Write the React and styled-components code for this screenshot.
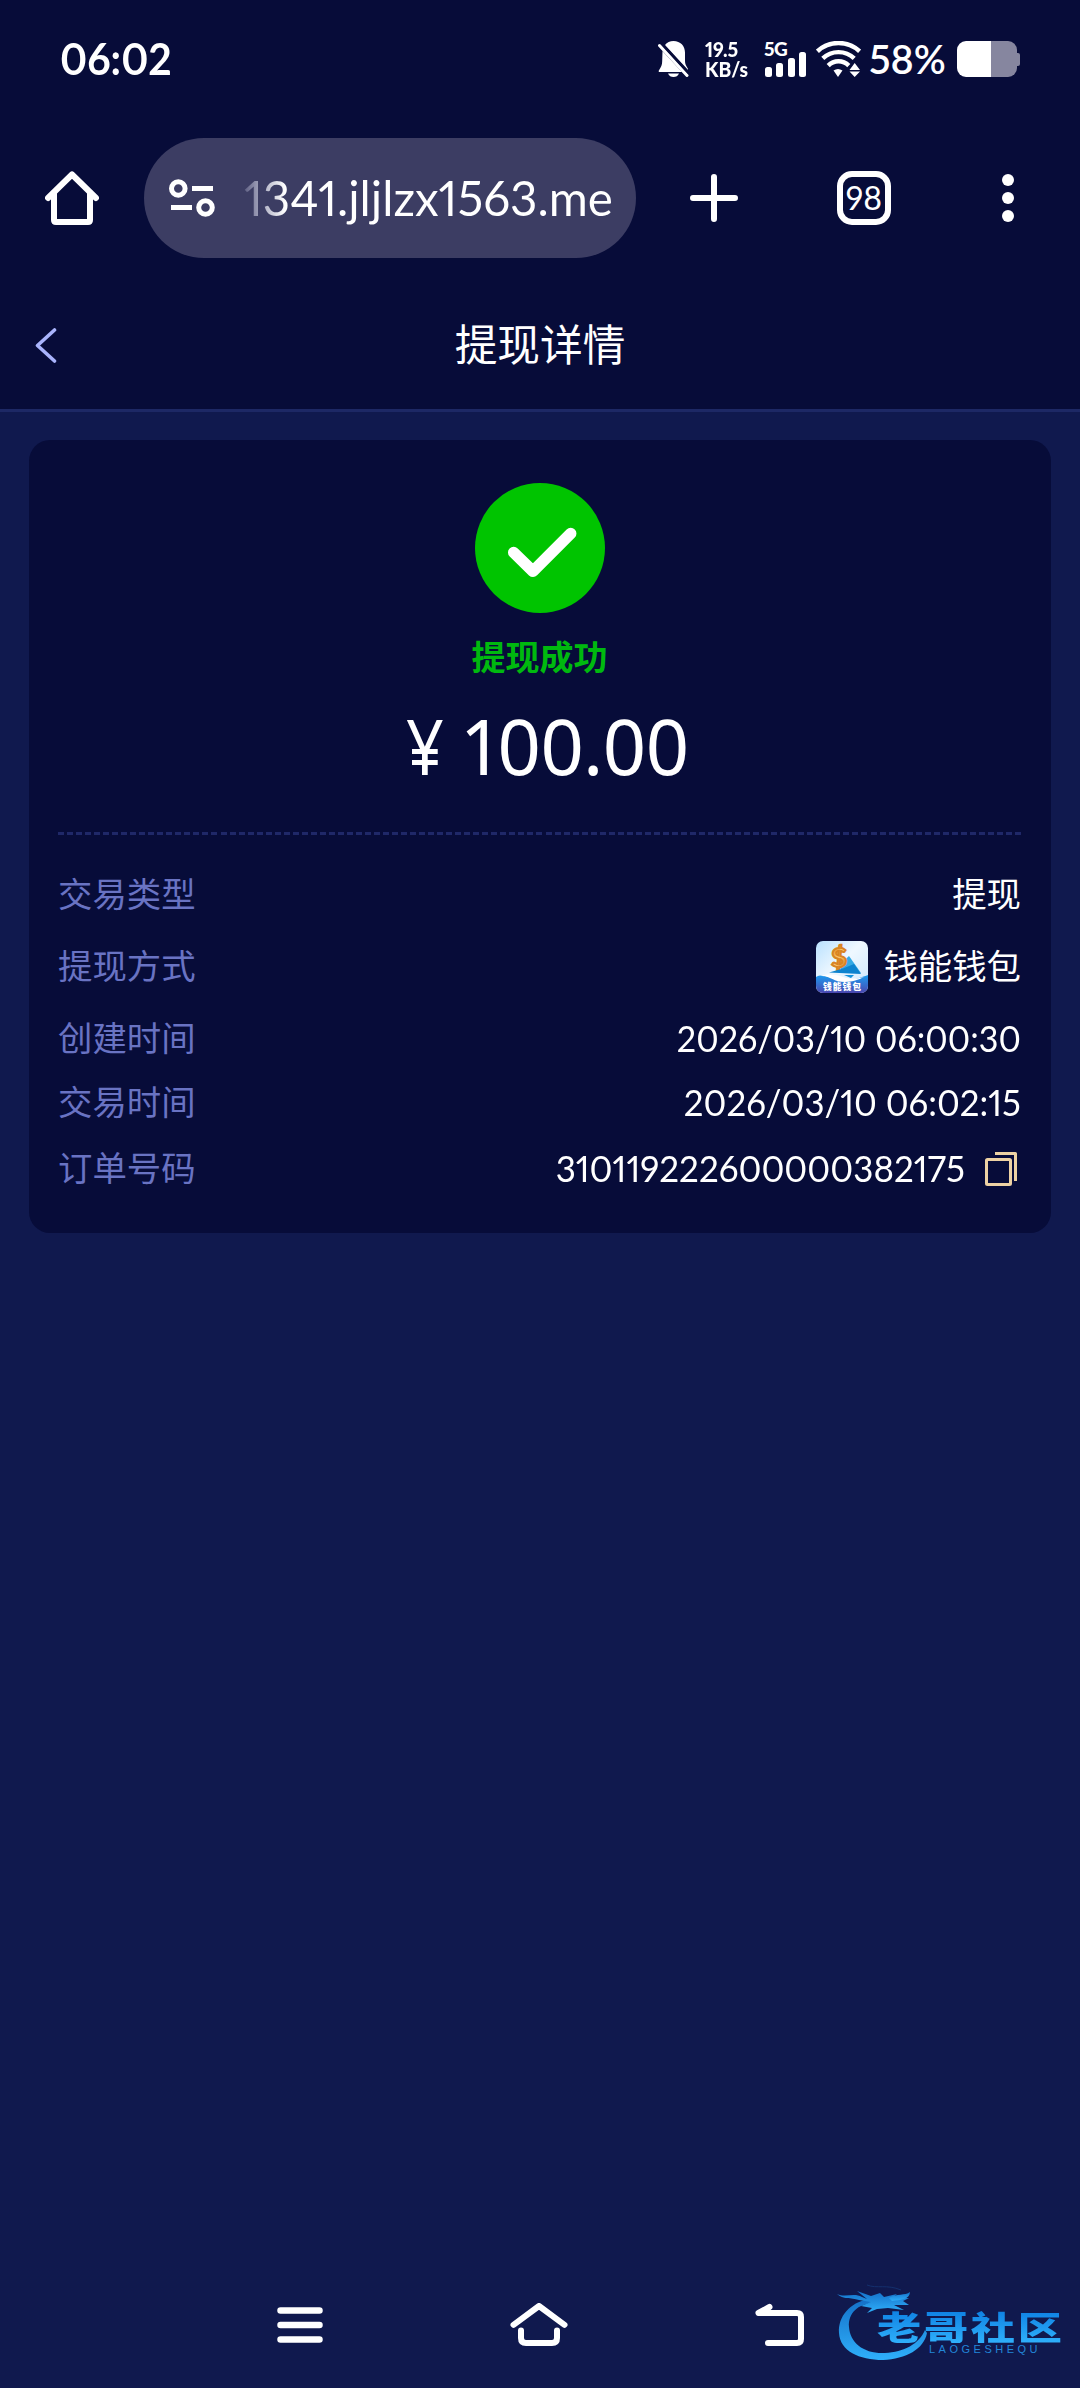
import React from "react";
import styled, { createGlobalStyle } from "styled-components";

const details = [
  { label: "交易类型", value: "提现", height: 71 },
  { label: "提现方式", value: "钱能钱包", height: 73, wallet: true },
  { label: "创建时间", value: "2026/03/10 06:00:30", height: 71, stretch: 0.948 },
  { label: "交易时间", value: "2026/03/10 06:02:15", height: 57, stretch: 0.966 },
  { label: "订单号码", value: "310119222600000382175", height: 75, stretch: 0.97, copy: true },
];

const BellOffIcon = () => (
  <svg width="31" height="36" viewBox="0 0 31 36" fill="#fff">
    <path d="M7 4C9 1.4 12 0 15.500 0C22.500 0 27 5 27 11.500V20C27 23 28 24.500 29.800 27.500L30 29L7 4Z" />
    <path d="M4.500 10L24 31H1.500C.6 31 .5 30 1 29.200C3 26 4.200 24 4.200 20Z" />
    <path d="M10 32.500H21C20 35 18 36 15.500 36S11 35 10 32.500Z" />
    <path d="M1.500 4.500L29 34.500" stroke="#fff" strokeWidth="3" strokeLinecap="round" />
    <path d="M3.800 2.600L31 32.200" stroke="#070c39" strokeWidth="2" />
  </svg>
);

const WifiIcon = () => (
  <svg width="45" height="36" viewBox="0 0 45 36" fill="none" stroke="#fff" strokeWidth="4.400">
    <path d="M1.400 10.300C13 -.8 32 -.8 43.600 10.300" />
    <path d="M6.800 17.400C15.500 9 29.500 9 38.200 17.400" />
    <path d="M12.200 24.600C18 18.800 27 18.800 32.800 24.600" />
    <path d="M17.500 29.500Q22 26.500 26.500 29.500L22 36Z" fill="#fff" stroke="none" />
    <path d="M33.500 29L38.700 22L44 29ZM33.500 30.500H44L38.700 36Z" fill="#fff" stroke="none" />
  </svg>
);

const HomeIcon = () => (
  <svg width="54" height="54" viewBox="0 0 54 54" fill="none" stroke="#fff" strokeWidth="6" strokeLinejoin="round" strokeLinecap="round">
    <path d="M3 27L27 3.500L51 27" />
    <path d="M9 22V49Q9 51 11 51H43Q45 51 45 49V22" />
  </svg>
);

const SiteIcon = () => (
  <svg width="46" height="38" viewBox="0 0 46 38" fill="none" stroke="#fff" strokeWidth="5">
    <circle cx="9.300" cy="9.500" r="6.800" />
    <path d="M23 9.500H44M2 28.500H23" />
    <circle cx="36.500" cy="28.500" r="6.800" />
  </svg>
);

const PlusIcon = () => (
  <svg width="48" height="48" viewBox="0 0 48 48" stroke="#fff" strokeWidth="6" strokeLinecap="round">
    <path d="M24 3V45M3 24H45" />
  </svg>
);

const MoreIcon = () => (
  <svg width="12" height="48" viewBox="0 0 12 48" fill="#fff">
    <circle cx="6" cy="6" r="6" />
    <circle cx="6" cy="24" r="6" />
    <circle cx="6" cy="42" r="6" />
  </svg>
);

const BackIcon = () => (
  <svg width="22" height="35" viewBox="0 0 22 35" fill="none" stroke="#a9b4fc" strokeWidth="3.600" strokeLinecap="round" strokeLinejoin="round">
    <path d="M19.500 2L2.500 17.500L19.500 33" />
  </svg>
);

const SuccessIcon = () => (
  <svg width="130" height="130" viewBox="0 0 130 130">
    <circle cx="65" cy="65" r="65" fill="#00c400" />
    <path d="M38.700 69.500L58 88.300L95.700 50.500" fill="none" stroke="#fff" strokeWidth="11.500" strokeLinecap="round" strokeLinejoin="round" />
  </svg>
);

const CopyIcon = () => (
  <svg width="32" height="34" viewBox="0 0 32 34" fill="none" stroke="#edd2a4" strokeWidth="3" strokeLinejoin="round">
    <rect x="1.500" y="7.500" width="24" height="25" rx="1" />
    <path d="M10 1.500H30.500V29" />
  </svg>
);

const WalletLogo = () => (
  <svg width="52" height="52" viewBox="0 0 52 52">
    <defs>
      <linearGradient id="walletSky" x1="0" y1="0" x2="1" y2="1">
        <stop offset="0" stopColor="#b9e1ff" />
        <stop offset=".45" stopColor="#eff8ff" />
        <stop offset="1" stopColor="#cbe7ff" />
      </linearGradient>
      <linearGradient id="walletSea" x1="0" y1="0" x2="0" y2="1">
        <stop offset="0" stopColor="#1c9cf0" />
        <stop offset="1" stopColor="#4a46b0" />
      </linearGradient>
      <linearGradient id="walletCoin" x1="0" y1="0" x2="1" y2="1">
        <stop offset="0" stopColor="#d97915" />
        <stop offset=".5" stopColor="#ffce73" />
        <stop offset="1" stopColor="#d06b12" />
      </linearGradient>
      <clipPath id="walletClip">
        <rect width="52" height="52" rx="7" />
      </clipPath>
    </defs>
    <g clipPath="url(#walletClip)">
      <rect width="52" height="52" fill="url(#walletSky)" />
      <path d="M33 15L45 32L20 27Z" fill="#35a9e4" />
      <text x="23" y="26" fontFamily="Lato" fontSize="27" fontWeight="900" textAnchor="middle" fill="url(#walletCoin)" stroke="#d98422" strokeWidth="2">$</text>
      <path d="M13 31.500L27 27.500L38 23L45 33Z" fill="#0d83cf" />
      <path d="M28 34H38L35 37Z" fill="#1593dd" />
      <path d="M0 36C7 32 13 37 22 38.500C34 41 43 37 52 34V52H0Z" fill="url(#walletSea)" />
      <path d="M4 35C14 34 17 41 29 41C37 41 44 38 48 36C39 38 34 38 27 36C18 33 12 33 4 35Z" fill="#fff" />
      <text x="26" y="49" fontFamily="Noto Sans CJK SC" fontSize="8.800" fontWeight="900" textAnchor="middle" fill="#fff" textLength="38">钱能钱包</text>
    </g>
  </svg>
);

const RecentsIcon = () => (
  <svg width="46" height="36" viewBox="0 0 46 36" stroke="#fff" strokeWidth="6.500" strokeLinecap="round">
    <path d="M3.500 3.500H42.500M3.500 18H42.500M3.500 32.500H42.500" />
  </svg>
);

const NavHomeIcon = () => (
  <svg width="58" height="44" viewBox="0 0 58 44" fill="none" stroke="#fff" strokeWidth="6" strokeLinecap="round" strokeLinejoin="round">
    <path d="M3.500 21.800L29 3L54.500 21.800" />
    <path d="M11 27.500V35Q11 40 16 40H42Q47 40 47 35V27.500" />
  </svg>
);

const NavBackIcon = () => (
  <svg width="50" height="44" viewBox="0 0 50 44" fill="none" stroke="#fff" strokeWidth="6" strokeLinecap="round" strokeLinejoin="round">
    <path d="M14.500 4L3.500 10H42Q46 10 46 14V36Q46 40 42 40H13" />
  </svg>
);

const DragonIcon = () => (
  <svg width="94" height="82" viewBox="0 0 94 82">
    <defs>
      <linearGradient id="dragonBlue" x1="0" y1="0" x2="0" y2="1">
        <stop offset="0" stopColor="#1470c8" />
        <stop offset="1" stopColor="#2fb0fb" />
      </linearGradient>
    </defs>
    <g fill="url(#dragonBlue)">
      <path d="M31 15C13 19 1 32 2 49C3 67 22 76 46 76C69 75 87 65 90 49L88 46C82 60 67 68 48 69C27 70 13 59 12 43C11 29 21 20 36 19Z" />
      <path d="M0 10C9 14 17 8 25 13L30 15L20 7L34 12L43 9L47 13L60 10L55 14L72 14L66 17L72 21L57 21L67 26L51 24L40 25L30 29L35 24L24 22L34 18L22 16C14 13 6 16 0 10Z" />
      <path d="M52 14C60 9 68 12 73 8C73 15 64 16 55 17Z" />
    </g>
    <path d="M30 1C40 5 50 0 64 6" fill="none" stroke="#14306e" strokeWidth="1" />
  </svg>
);

const App = () => (
  <Screen>
    <GlobalStyle />
    <StatusBar>
      <Clock>06:02</Clock>
      <StatusIcons>
        <BellOffIcon />
        <NetSpeed>
          <span>19.5</span>
          <span>KB/s</span>
        </NetSpeed>
        <Signal>
          <SignalLabel>5G</SignalLabel>
          <Bars>
            <Bar $height={10} />
            <Bar $height={14} />
            <Bar $height={19} />
            <Bar $height={25} />
          </Bars>
        </Signal>
        <Wifi>
          <WifiIcon />
        </Wifi>
        <Percent>58%</Percent>
        <Battery>
          <BatteryBody />
          <BatteryCap />
        </Battery>
      </StatusIcons>
    </StatusBar>

    <BrowserBar>
      <HomeIcon />
      <AddressBar>
        <SiteIcon />
        <Url>1341.jljlzx1563.me</Url>
      </AddressBar>
      <PlusIcon />
      <TabCount>98</TabCount>
      <MoreIcon />
    </BrowserBar>

    <Header>
      <BackIcon />
      <Title>提现详情</Title>
    </Header>

    <Card>
      <Result>
        <SuccessIcon />
        <ResultText>提现成功</ResultText>
        <Amount>
          <Currency>¥</Currency>
          <span>100.00</span>
        </Amount>
      </Result>
      <Divider />
      {details.map((row) => (
        <Row key={row.label} $height={row.height}>
          <Label>{row.label}</Label>
          <Value>
            {row.wallet && <WalletLogo />}
            {row.stretch ? <Digits $stretch={row.stretch}>{row.value}</Digits> : <Name>{row.value}</Name>}
            {row.copy && <CopyIcon />}
          </Value>
        </Row>
      ))}
    </Card>

    <NavBar>
      <RecentsIcon />
      <NavHomeIcon />
      <NavBackIcon />
      <Watermark>
        <DragonIcon />
        <WatermarkText>
          <WatermarkName>老哥社区</WatermarkName>
          <WatermarkLatin>LAOGESHEQU</WatermarkLatin>
        </WatermarkText>
      </Watermark>
    </NavBar>
  </Screen>
);

export default App;

const GlobalStyle = createGlobalStyle`
  body {
    margin: 0;
    background: #10194e;
  }

  svg {
    display: block;
    flex: none;
  }
`;

const Screen = styled.div`
  display: flex;
  flex-direction: column;
  width: 1080px;
  height: 2388px;
  overflow: hidden;
  background: #10194e;
  color: #fff;
  font-family: Lato, "Noto Sans CJK SC", sans-serif;
  font-feature-settings: "pnum";
  white-space: nowrap;
`;

const StatusBar = styled.div`
  display: flex;
  align-items: center;
  justify-content: space-between;
  box-sizing: border-box;
  height: 118px;
  padding: 0 60px;
  background: #070c39;
`;

const Clock = styled.div`
  font-size: 43px;
  font-weight: 700;
  line-height: 44px;
  transform: scaleX(0.95);
  transform-origin: left;
`;

const StatusIcons = styled.div`
  display: flex;
  align-items: center;
`;

const NetSpeed = styled.div`
  display: flex;
  flex-direction: column;
  width: 42px;
  margin-left: 16px;
  margin-right: 1px;
  font-size: 21px;
  font-weight: 900;
  line-height: 20px;
  transform: scaleX(0.92);
  transform-origin: left;
`;

const Signal = styled.div`
  width: 42px;
  height: 36px;
  margin-left: 16px;
`;

const SignalLabel = styled.div`
  height: 11px;
  font-size: 19px;
  font-weight: 900;
  line-height: 15px;
  letter-spacing: -0.5px;
`;

const Bars = styled.div`
  display: flex;
  align-items: flex-end;
  justify-content: space-between;
  height: 25px;
  padding-left: 1px;
`;

const Bar = styled.div`
  width: 7px;
  height: ${(props) => props.$height}px;
  border-radius: 2.5px;
  background: #fff;
`;

const Wifi = styled.div`
  margin-left: 10px;
`;

const Percent = styled.div`
  width: 77px;
  margin: 0 11px 0 8px;
  font-size: 39.5px;
  font-weight: 600;
  line-height: 40px;
`;

const Battery = styled.div`
  display: flex;
  align-items: center;
  width: 63px;
`;

const BatteryBody = styled.div`
  width: 60px;
  height: 36px;
  border-radius: 9px;
  background: linear-gradient(to right, #fff 34px, #86869f 34px);
`;

const BatteryCap = styled.div`
  width: 3px;
  height: 13px;
  border-radius: 0 2px 2px 0;
  background: #86869f;
`;

const BrowserBar = styled.div`
  display: flex;
  align-items: center;
  box-sizing: border-box;
  height: 165px;
  padding: 0 0 5px 45px;
  background: #070c39;
`;

const AddressBar = styled.div`
  display: flex;
  align-items: center;
  box-sizing: border-box;
  width: 492px;
  height: 120px;
  margin: 0 54px 0 45px;
  padding-left: 25px;
  border-radius: 60px;
  background: #3c3d63;
`;

const Url = styled.div`
  margin: 0 0 3px 29px;
  font-size: 48.5px;
  line-height: 60px;
  background: linear-gradient(to right, #5d5e82 0, #9b9cb5 14px, #fff 42px);
  background-clip: text;
  color: transparent;
  transform: scaleX(0.98);
  transform-origin: left;
`;

const TabCount = styled.div`
  box-sizing: border-box;
  width: 54px;
  height: 54px;
  margin: 0 111px 0 99px;
  border: 6px solid #fff;
  border-radius: 15px;
  font-size: 32px;
  line-height: 42px;
  text-align: center;
`;

const Header = styled.header`
  display: grid;
  grid-template-columns: 120px 1fr 120px;
  align-items: center;
  box-sizing: border-box;
  height: 129px;
  border-bottom: 3px solid #1d2865;
  background: #070c39;

  svg {
    margin: 0 0 2px 35px;
  }
`;

const Title = styled.h1`
  margin: 0 0 3px;
  font-size: 42.7px;
  font-weight: 400;
  line-height: 60px;
  text-align: center;
`;

const Card = styled.section`
  box-sizing: border-box;
  width: 1022px;
  height: 793px;
  margin: 28px 0 0 29px;
  padding: 43px 30px 0 29px;
  border-radius: 21px;
  background: #070c39;
`;

const Result = styled.div`
  display: flex;
  flex-direction: column;
  align-items: center;
  height: 349px;
`;

const ResultText = styled.div`
  margin-top: 19px;
  font-size: 34px;
  font-weight: 700;
  line-height: 50px;
  color: #00b90f;
`;

const Amount = styled.div`
  display: flex;
  align-items: center;
  margin: 24px 0 0 15px;
  font-family: "Noto Sans", sans-serif;
  font-size: 76px;
  line-height: 80px;
  letter-spacing: -1.3px;
`;

const Currency = styled.span`
  width: 59px;
  transform: scaleX(0.87);
  transform-origin: left;
`;

const Divider = styled.div`
  height: 3px;
  margin-bottom: 24px;
  background: repeating-linear-gradient(to right, #1f2868 0 6px, transparent 6px 9.028px);
`;

const Row = styled.div`
  display: flex;
  align-items: center;
  justify-content: space-between;
  height: ${(props) => props.$height}px;
  font-size: 34.4px;
`;

const Label = styled.span`
  padding-bottom: 6px;
  color: #6973c3;
`;

const Name = styled.span`
  padding-bottom: 6px;
`;

const Value = styled.div`
  display: flex;
  align-items: center;

  svg:first-child {
    margin-right: 15px;
  }

  svg:last-child {
    margin: 0 4px 0 20px;
  }
`;

const Digits = styled.span`
  padding-bottom: 2px;
  font-size: 36px;
  transform: scaleX(${(props) => props.$stretch});
  transform-origin: right;
`;

const NavBar = styled.nav`
  position: relative;
  display: flex;
  align-items: center;
  justify-content: center;
  gap: 187px;
  box-sizing: border-box;
  height: 126px;
  padding-left: 2px;
  margin-top: auto;
`;

const Watermark = styled.div`
  position: absolute;
  top: 22px;
  left: 837px;
  display: flex;
`;

const WatermarkText = styled.div`
  margin: 25px 0 0 -54px;
`;

const WatermarkName = styled.div`
  font-family: "Noto Sans CJK SC", sans-serif;
  font-size: 33px;
  font-weight: 900;
  line-height: 34px;
  letter-spacing: 2px;
  transform: scaleX(1.34);
  transform-origin: left;
  background: linear-gradient(#0d7fe2, #2fb0fb);
  background-clip: text;
  color: transparent;
`;

const WatermarkLatin = styled.div`
  margin-left: 52px;
  font-family: "Liberation Sans", sans-serif;
  font-size: 11px;
  line-height: 12px;
  letter-spacing: 3.5px;
  color: #2286d8;
`;
